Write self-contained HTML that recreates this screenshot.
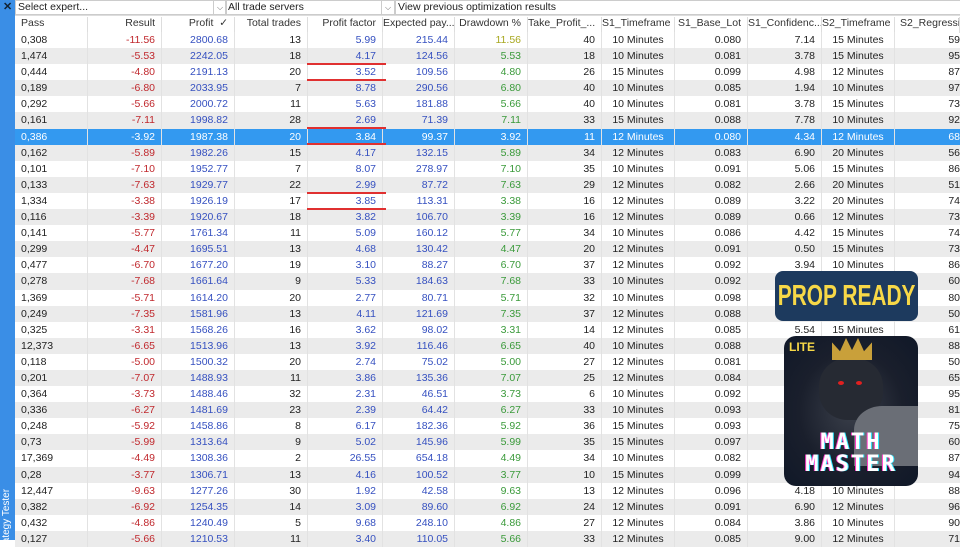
<!DOCTYPE html><html><head><meta charset="utf-8"><style>
*{margin:0;padding:0;box-sizing:border-box}
body{width:960px;height:540px;overflow:hidden;background:#fff;font-family:"Liberation Sans",Tahoma,sans-serif;font-size:10.5px;color:#222;position:relative}
#strip{position:absolute;left:0;top:0;width:15px;height:540px;background:#3a8ee6}
#x{position:absolute;left:3px;top:0;color:#123;font-weight:bold;font-size:11px}
#st{position:absolute;left:1px;top:556px;transform:rotate(-90deg);transform-origin:0 0;color:#fff;font-size:10px;white-space:nowrap;width:80px}
#top{position:absolute;left:15px;top:0;width:945px;height:16px;border-bottom:1px solid #ddd}
.dd{position:absolute;top:0;height:15px;border:1px solid #ccc;padding-left:2px;line-height:13px;font-size:10.5px}
.dd i{position:absolute;right:0;top:0;width:13px;height:13px;border-left:1px solid #ccc;font-style:normal;font-size:8px;text-align:center;color:#666}
#hdr{position:absolute;left:15px;top:17px;height:16px;display:flex}
#rows{position:absolute;left:15px;top:32px;width:945px}
.r{display:flex;height:16.1px;line-height:16px}
.r:nth-child(even){background:#ebebeb}
.r.sel{background:#3399f0;color:#fff}
.r.sel span{color:#fff!important}
.c{text-align:right;padding-right:6px;border-right:1px solid #e2e2e2;white-space:nowrap;overflow:hidden}
#hdr .c{color:#333;border-right:1px solid #ddd}
.w0{width:73px;text-align:left;padding-left:6px}.w1{width:74px}.w2{width:73px}.w3{width:73px}.w4{width:75px}.w5{width:72px}.w6{width:73px}.w7{width:74px}.w8{width:73px}.w9{width:73px}.w10{width:74px}.w11{width:73px}.w12{width:65px;text-align:left;padding-left:5px;border:none}
.r .w1{color:#c0282d}.r .w2,.r .w4,.r .w5{color:#3550c0}.r .w6{color:#3a9a3a}
.r .w8,.r .w11{text-align:center;padding:0}
.r .w12{text-align:right;padding-right:0}
.ul{position:absolute;left:307px;width:79px;height:2px;background:#e03030}
#prop{position:absolute;left:775px;top:271px;width:143px;height:50px;background:#1d3a5e;border-radius:8px;overflow:hidden;text-align:center}
#prop span{display:inline-block;margin-top:6px;transform:scaleX(0.72);color:#f7d847;font-weight:bold;font-size:29px;white-space:nowrap;line-height:38px;margin-left:-40px;margin-right:-40px}
#img{position:absolute;left:784px;top:336px;width:134px;height:150px;border-radius:12px;overflow:hidden;background:radial-gradient(ellipse at 50% 50%,#3a3f4a 0%,#1a1f2c 55%,#101828 100%)}
#img .lite{position:absolute;left:5px;top:4px;color:#f7d847;font-weight:bold;font-size:12px}
#img .crown{position:absolute;left:48px;top:2px;width:40px;height:22px;background:#c9a03a;clip-path:polygon(0 100%,0 20%,20% 60%,35% 0,50% 55%,65% 0,80% 60%,100% 20%,100% 100%)}
#img .head{position:absolute;left:35px;top:22px;width:64px;height:62px;background:#262a33;border-radius:45%}
#img .eye{position:absolute;top:45px;width:6px;height:4px;background:#e02020;border-radius:50%}
#img .arm{position:absolute;left:70px;top:70px;width:70px;height:60px;background:#6a6e76;border-radius:40% 0 0 0}
#img .mm{position:absolute;left:0;width:134px;text-align:center;color:#fff;font-weight:bold;font-size:22px;letter-spacing:2px;text-shadow:-1px 0 #ff3cc8,1px 0 #30e8ff;font-family:"DejaVu Sans Mono",monospace}
</style></head><body>
<div id="strip"><div id="x">✕</div><div id="st">Strategy Tester</div></div>
<div id="top">
<div class="dd" style="left:0;width:212px">Select expert...<i>⌵</i></div>
<div class="dd" style="left:210px;width:170px">All trade servers<i>⌵</i></div>
<div class="dd" style="left:380px;width:565px;border-right:none">View previous optimization results</div>
</div>
<div id="hdr"><div class="c w0">Pass</div><div class="c w1">Result</div><div class="c w2">Profit &nbsp;✓</div><div class="c w3">Total trades</div><div class="c w4">Profit factor</div><div class="c w5">Expected pay...</div><div class="c w6">Drawdown %</div><div class="c w7">Take_Profit_...</div><div class="c w8" style="text-align:center">S1_Timeframe</div><div class="c w9">S1_Base_Lot</div><div class="c w10">S1_Confidenc...</div><div class="c w11" style="text-align:center">S2_Timeframe</div><div class="c w12">S2_Regressio...</div></div>
<div id="rows">
<div class="r"><span class="c w0">0,308</span><span class="c w1">-11.56</span><span class="c w2">2800.68</span><span class="c w3">13</span><span class="c w4">5.99</span><span class="c w5">215.44</span><span class="c w6" style="color:#a8a820">11.56</span><span class="c w7">40</span><span class="c w8">10 Minutes</span><span class="c w9">0.080</span><span class="c w10">7.14</span><span class="c w11">15 Minutes</span><span class="c w12">59</span></div>
<div class="r"><span class="c w0">1,474</span><span class="c w1">-5.53</span><span class="c w2">2242.05</span><span class="c w3">18</span><span class="c w4">4.17</span><span class="c w5">124.56</span><span class="c w6">5.53</span><span class="c w7">18</span><span class="c w8">10 Minutes</span><span class="c w9">0.081</span><span class="c w10">3.78</span><span class="c w11">15 Minutes</span><span class="c w12">95</span></div>
<div class="r"><span class="c w0">0,444</span><span class="c w1">-4.80</span><span class="c w2">2191.13</span><span class="c w3">20</span><span class="c w4">3.52</span><span class="c w5">109.56</span><span class="c w6">4.80</span><span class="c w7">26</span><span class="c w8">15 Minutes</span><span class="c w9">0.099</span><span class="c w10">4.98</span><span class="c w11">12 Minutes</span><span class="c w12">87</span></div>
<div class="r"><span class="c w0">0,189</span><span class="c w1">-6.80</span><span class="c w2">2033.95</span><span class="c w3">7</span><span class="c w4">8.78</span><span class="c w5">290.56</span><span class="c w6">6.80</span><span class="c w7">40</span><span class="c w8">10 Minutes</span><span class="c w9">0.085</span><span class="c w10">1.94</span><span class="c w11">10 Minutes</span><span class="c w12">97</span></div>
<div class="r"><span class="c w0">0,292</span><span class="c w1">-5.66</span><span class="c w2">2000.72</span><span class="c w3">11</span><span class="c w4">5.63</span><span class="c w5">181.88</span><span class="c w6">5.66</span><span class="c w7">40</span><span class="c w8">10 Minutes</span><span class="c w9">0.081</span><span class="c w10">3.78</span><span class="c w11">15 Minutes</span><span class="c w12">73</span></div>
<div class="r"><span class="c w0">0,161</span><span class="c w1">-7.11</span><span class="c w2">1998.82</span><span class="c w3">28</span><span class="c w4">2.69</span><span class="c w5">71.39</span><span class="c w6">7.11</span><span class="c w7">33</span><span class="c w8">15 Minutes</span><span class="c w9">0.088</span><span class="c w10">7.78</span><span class="c w11">10 Minutes</span><span class="c w12">92</span></div>
<div class="r sel"><span class="c w0">0,386</span><span class="c w1">-3.92</span><span class="c w2">1987.38</span><span class="c w3">20</span><span class="c w4">3.84</span><span class="c w5">99.37</span><span class="c w6">3.92</span><span class="c w7">11</span><span class="c w8">12 Minutes</span><span class="c w9">0.080</span><span class="c w10">4.34</span><span class="c w11">12 Minutes</span><span class="c w12">68</span></div>
<div class="r"><span class="c w0">0,162</span><span class="c w1">-5.89</span><span class="c w2">1982.26</span><span class="c w3">15</span><span class="c w4">4.17</span><span class="c w5">132.15</span><span class="c w6">5.89</span><span class="c w7">34</span><span class="c w8">12 Minutes</span><span class="c w9">0.083</span><span class="c w10">6.90</span><span class="c w11">20 Minutes</span><span class="c w12">56</span></div>
<div class="r"><span class="c w0">0,101</span><span class="c w1">-7.10</span><span class="c w2">1952.77</span><span class="c w3">7</span><span class="c w4">8.07</span><span class="c w5">278.97</span><span class="c w6">7.10</span><span class="c w7">35</span><span class="c w8">10 Minutes</span><span class="c w9">0.091</span><span class="c w10">5.06</span><span class="c w11">15 Minutes</span><span class="c w12">86</span></div>
<div class="r"><span class="c w0">0,133</span><span class="c w1">-7.63</span><span class="c w2">1929.77</span><span class="c w3">22</span><span class="c w4">2.99</span><span class="c w5">87.72</span><span class="c w6">7.63</span><span class="c w7">29</span><span class="c w8">12 Minutes</span><span class="c w9">0.082</span><span class="c w10">2.66</span><span class="c w11">20 Minutes</span><span class="c w12">51</span></div>
<div class="r"><span class="c w0">1,334</span><span class="c w1">-3.38</span><span class="c w2">1926.19</span><span class="c w3">17</span><span class="c w4">3.85</span><span class="c w5">113.31</span><span class="c w6">3.38</span><span class="c w7">16</span><span class="c w8">12 Minutes</span><span class="c w9">0.089</span><span class="c w10">3.22</span><span class="c w11">20 Minutes</span><span class="c w12">74</span></div>
<div class="r"><span class="c w0">0,116</span><span class="c w1">-3.39</span><span class="c w2">1920.67</span><span class="c w3">18</span><span class="c w4">3.82</span><span class="c w5">106.70</span><span class="c w6">3.39</span><span class="c w7">16</span><span class="c w8">12 Minutes</span><span class="c w9">0.089</span><span class="c w10">0.66</span><span class="c w11">12 Minutes</span><span class="c w12">73</span></div>
<div class="r"><span class="c w0">0,141</span><span class="c w1">-5.77</span><span class="c w2">1761.34</span><span class="c w3">11</span><span class="c w4">5.09</span><span class="c w5">160.12</span><span class="c w6">5.77</span><span class="c w7">34</span><span class="c w8">10 Minutes</span><span class="c w9">0.086</span><span class="c w10">4.42</span><span class="c w11">15 Minutes</span><span class="c w12">74</span></div>
<div class="r"><span class="c w0">0,299</span><span class="c w1">-4.47</span><span class="c w2">1695.51</span><span class="c w3">13</span><span class="c w4">4.68</span><span class="c w5">130.42</span><span class="c w6">4.47</span><span class="c w7">20</span><span class="c w8">12 Minutes</span><span class="c w9">0.091</span><span class="c w10">0.50</span><span class="c w11">15 Minutes</span><span class="c w12">73</span></div>
<div class="r"><span class="c w0">0,477</span><span class="c w1">-6.70</span><span class="c w2">1677.20</span><span class="c w3">19</span><span class="c w4">3.10</span><span class="c w5">88.27</span><span class="c w6">6.70</span><span class="c w7">37</span><span class="c w8">12 Minutes</span><span class="c w9">0.092</span><span class="c w10">3.94</span><span class="c w11">10 Minutes</span><span class="c w12">86</span></div>
<div class="r"><span class="c w0">0,278</span><span class="c w1">-7.68</span><span class="c w2">1661.64</span><span class="c w3">9</span><span class="c w4">5.33</span><span class="c w5">184.63</span><span class="c w6">7.68</span><span class="c w7">33</span><span class="c w8">10 Minutes</span><span class="c w9">0.092</span><span class="c w10">6.12</span><span class="c w11">15 Minutes</span><span class="c w12">60</span></div>
<div class="r"><span class="c w0">1,369</span><span class="c w1">-5.71</span><span class="c w2">1614.20</span><span class="c w3">20</span><span class="c w4">2.77</span><span class="c w5">80.71</span><span class="c w6">5.71</span><span class="c w7">32</span><span class="c w8">10 Minutes</span><span class="c w9">0.098</span><span class="c w10">2.04</span><span class="c w11">12 Minutes</span><span class="c w12">80</span></div>
<div class="r"><span class="c w0">0,249</span><span class="c w1">-7.35</span><span class="c w2">1581.96</span><span class="c w3">13</span><span class="c w4">4.11</span><span class="c w5">121.69</span><span class="c w6">7.35</span><span class="c w7">37</span><span class="c w8">12 Minutes</span><span class="c w9">0.088</span><span class="c w10">5.10</span><span class="c w11">10 Minutes</span><span class="c w12">50</span></div>
<div class="r"><span class="c w0">0,325</span><span class="c w1">-3.31</span><span class="c w2">1568.26</span><span class="c w3">16</span><span class="c w4">3.62</span><span class="c w5">98.02</span><span class="c w6">3.31</span><span class="c w7">14</span><span class="c w8">12 Minutes</span><span class="c w9">0.085</span><span class="c w10">5.54</span><span class="c w11">15 Minutes</span><span class="c w12">61</span></div>
<div class="r"><span class="c w0">12,373</span><span class="c w1">-6.65</span><span class="c w2">1513.96</span><span class="c w3">13</span><span class="c w4">3.92</span><span class="c w5">116.46</span><span class="c w6">6.65</span><span class="c w7">40</span><span class="c w8">10 Minutes</span><span class="c w9">0.088</span><span class="c w10">4.10</span><span class="c w11">10 Minutes</span><span class="c w12">88</span></div>
<div class="r"><span class="c w0">0,118</span><span class="c w1">-5.00</span><span class="c w2">1500.32</span><span class="c w3">20</span><span class="c w4">2.74</span><span class="c w5">75.02</span><span class="c w6">5.00</span><span class="c w7">27</span><span class="c w8">12 Minutes</span><span class="c w9">0.081</span><span class="c w10">3.02</span><span class="c w11">12 Minutes</span><span class="c w12">50</span></div>
<div class="r"><span class="c w0">0,201</span><span class="c w1">-7.07</span><span class="c w2">1488.93</span><span class="c w3">11</span><span class="c w4">3.86</span><span class="c w5">135.36</span><span class="c w6">7.07</span><span class="c w7">25</span><span class="c w8">12 Minutes</span><span class="c w9">0.084</span><span class="c w10">4.40</span><span class="c w11">15 Minutes</span><span class="c w12">65</span></div>
<div class="r"><span class="c w0">0,364</span><span class="c w1">-3.73</span><span class="c w2">1488.46</span><span class="c w3">32</span><span class="c w4">2.31</span><span class="c w5">46.51</span><span class="c w6">3.73</span><span class="c w7">6</span><span class="c w8">10 Minutes</span><span class="c w9">0.092</span><span class="c w10">3.30</span><span class="c w11">12 Minutes</span><span class="c w12">95</span></div>
<div class="r"><span class="c w0">0,336</span><span class="c w1">-6.27</span><span class="c w2">1481.69</span><span class="c w3">23</span><span class="c w4">2.39</span><span class="c w5">64.42</span><span class="c w6">6.27</span><span class="c w7">33</span><span class="c w8">10 Minutes</span><span class="c w9">0.093</span><span class="c w10">5.80</span><span class="c w11">10 Minutes</span><span class="c w12">81</span></div>
<div class="r"><span class="c w0">0,248</span><span class="c w1">-5.92</span><span class="c w2">1458.86</span><span class="c w3">8</span><span class="c w4">6.17</span><span class="c w5">182.36</span><span class="c w6">5.92</span><span class="c w7">36</span><span class="c w8">15 Minutes</span><span class="c w9">0.093</span><span class="c w10">4.70</span><span class="c w11">15 Minutes</span><span class="c w12">75</span></div>
<div class="r"><span class="c w0">0,73</span><span class="c w1">-5.99</span><span class="c w2">1313.64</span><span class="c w3">9</span><span class="c w4">5.02</span><span class="c w5">145.96</span><span class="c w6">5.99</span><span class="c w7">35</span><span class="c w8">15 Minutes</span><span class="c w9">0.097</span><span class="c w10">2.80</span><span class="c w11">10 Minutes</span><span class="c w12">60</span></div>
<div class="r"><span class="c w0">17,369</span><span class="c w1">-4.49</span><span class="c w2">1308.36</span><span class="c w3">2</span><span class="c w4">26.55</span><span class="c w5">654.18</span><span class="c w6">4.49</span><span class="c w7">34</span><span class="c w8">10 Minutes</span><span class="c w9">0.082</span><span class="c w10">6.60</span><span class="c w11">12 Minutes</span><span class="c w12">87</span></div>
<div class="r"><span class="c w0">0,28</span><span class="c w1">-3.77</span><span class="c w2">1306.71</span><span class="c w3">13</span><span class="c w4">4.16</span><span class="c w5">100.52</span><span class="c w6">3.77</span><span class="c w7">10</span><span class="c w8">15 Minutes</span><span class="c w9">0.099</span><span class="c w10">1.40</span><span class="c w11">10 Minutes</span><span class="c w12">94</span></div>
<div class="r"><span class="c w0">12,447</span><span class="c w1">-9.63</span><span class="c w2">1277.26</span><span class="c w3">30</span><span class="c w4">1.92</span><span class="c w5">42.58</span><span class="c w6">9.63</span><span class="c w7">13</span><span class="c w8">12 Minutes</span><span class="c w9">0.096</span><span class="c w10">4.18</span><span class="c w11">10 Minutes</span><span class="c w12">88</span></div>
<div class="r"><span class="c w0">0,382</span><span class="c w1">-6.92</span><span class="c w2">1254.35</span><span class="c w3">14</span><span class="c w4">3.09</span><span class="c w5">89.60</span><span class="c w6">6.92</span><span class="c w7">24</span><span class="c w8">12 Minutes</span><span class="c w9">0.091</span><span class="c w10">6.90</span><span class="c w11">12 Minutes</span><span class="c w12">96</span></div>
<div class="r"><span class="c w0">0,432</span><span class="c w1">-4.86</span><span class="c w2">1240.49</span><span class="c w3">5</span><span class="c w4">9.68</span><span class="c w5">248.10</span><span class="c w6">4.86</span><span class="c w7">27</span><span class="c w8">12 Minutes</span><span class="c w9">0.084</span><span class="c w10">3.86</span><span class="c w11">10 Minutes</span><span class="c w12">90</span></div>
<div class="r"><span class="c w0">0,127</span><span class="c w1">-5.66</span><span class="c w2">1210.53</span><span class="c w3">11</span><span class="c w4">3.40</span><span class="c w5">110.05</span><span class="c w6">5.66</span><span class="c w7">33</span><span class="c w8">12 Minutes</span><span class="c w9">0.085</span><span class="c w10">9.00</span><span class="c w11">12 Minutes</span><span class="c w12">71</span></div>
</div>
<div class="ul" style="top:63px"></div><div class="ul" style="top:79px"></div>
<div class="ul" style="top:127px"></div><div class="ul" style="top:143px"></div>
<div class="ul" style="top:192px"></div><div class="ul" style="top:208px"></div>
<div id="prop"><span>PROP READY</span></div>
<div id="img"><div class="head"></div><div class="crown"></div><div class="eye" style="left:54px"></div><div class="eye" style="left:72px"></div><div class="arm"></div><div class="lite">LITE</div><div class="mm" style="top:94px">MATH</div><div class="mm" style="top:116px">MASTER</div></div>
</body></html>
